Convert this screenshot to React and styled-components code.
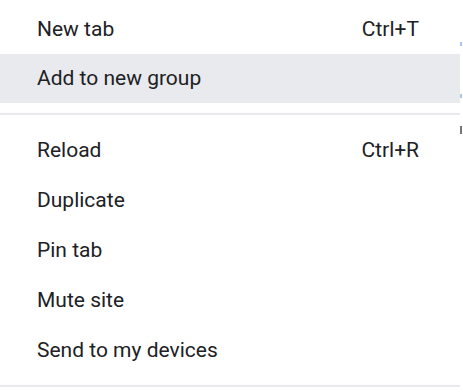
import React from "react";
import styled, { createGlobalStyle } from "styled-components";

const Global = createGlobalStyle`
  html, body { margin: 0; padding: 0; background: #ffffff; }
  body { font-family: Roboto, "Noto Sans", Arial, sans-serif; }
`;

const Page = styled.div`
  display: flex;
  width: 463px;
  height: 392px;
  overflow: hidden;
  background: #ffffff;
`;

const Menu = styled.div`
  width: 460px;
  flex: none;
  display: flex;
  flex-direction: column;
  padding-top: 5px;
  background: #ffffff;
`;

const Item = styled.div`
  display: flex;
  align-items: center;
  justify-content: space-between;
  height: ${(p) => p.$h || 50}px;
  padding: 0 41px 0 37px;
  background: ${(p) => (p.$active ? "#e8eaed" : "transparent")};
  color: #202124;
  font-size: 21px;
  line-height: 1;
`;

const Label = styled.span``;
const Shortcut = styled.span`
  color: #202124;
`;

const Separator = styled.div`
  height: 2px;
  background: #e8eaed;
  margin: ${(p) => p.$m || "10px 0 10px"};
`;

const Edge = styled.div`
  flex: 1;
  display: flex;
  flex-direction: column;
  align-items: flex-start;
  padding-top: 42px;
`;

const Mark = styled.div`
  width: 2px;
  height: ${(p) => p.$h}px;
  margin-top: ${(p) => p.$t}px;
  background: ${(p) => p.$c};
`;

export default function App() {
  return (
    <>
      <Global />
      <Page>
        <Menu>
          <Item $h={49}>
            <Label>New tab</Label>
            <Shortcut>Ctrl+T</Shortcut>
          </Item>
          <Item $h={49} $active>
            <Label>Add to new group</Label>
          </Item>
          <Separator />
          <Item>
            <Label>Reload</Label>
            <Shortcut>Ctrl+R</Shortcut>
          </Item>
          <Item>
            <Label>Duplicate</Label>
          </Item>
          <Item>
            <Label>Pin tab</Label>
          </Item>
          <Item>
            <Label>Mute site</Label>
          </Item>
          <Item>
            <Label>Send to my devices</Label>
          </Item>
          <Separator $m="10px 0 0" />
        </Menu>
        <Edge>
          <Mark $h={4} $t={0} $c="#a8c4f0" />
          <Mark $h={4} $t={48} $c="#a8c4f0" />
          <Mark $h={8} $t={28} $c="#777" />
        </Edge>
      </Page>
    </>
  );
}
